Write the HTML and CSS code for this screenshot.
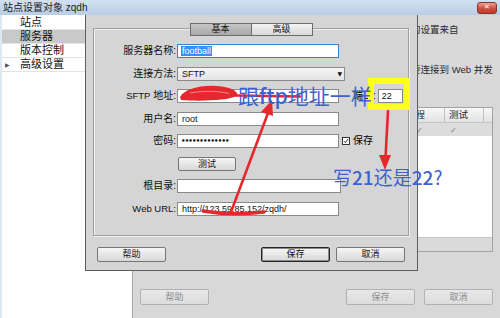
FILE: index.html
```html
<!DOCTYPE html>
<html lang="zh-CN">
<head>
<meta charset="utf-8">
<title>站点设置对象 zqdh</title>
<link rel="stylesheet" href="styles.css">
</head>
<body>
<div class="app">
  <div class="titlebar">
    <span class="title">站点设置对象 zqdh</span>
    <span class="close">✕</span>
  </div>
  <div class="main">
    <div class="sidebar">
      <div class="nav-item">站点</div>
      <div class="nav-item selected">服务器</div>
      <div class="nav-item">版本控制</div>
      <div class="nav-item"><span class="tri">▶</span>高级设置</div>
    </div>
    <div class="content">
      <p class="info info-1">的设置来自</p>
      <p class="info info-2">要连接到 Web 并发</p>
      <div class="table">
        <div class="thead">
          <div class="th c1">远程</div>
          <div class="th c2">测试</div>
          <div class="th c3"></div>
        </div>
        <div class="trow">
          <div class="td c1"><span class="tick">✓</span></div>
          <div class="td c2"><span class="tick">✓</span></div>
        </div>
        <div class="tbody"></div>
        <div class="tfoot"></div>
      </div>
      <div class="content-buttons">
        <span class="btn btn-disabled">帮助</span>
        <div class="btn-group wide">
          <span class="btn btn-disabled">保存</span>
          <span class="btn btn-disabled">取消</span>
        </div>
      </div>
    </div>
  </div>

  <div class="dialog">
    <div class="groupbox">
      <div class="tabs">
        <span class="tab tab-active">基本</span>
        <span class="tab tab-2">高级</span>
      </div>
      <div class="form">
        <label class="lbl">服务器名称:</label>
        <div class="field"><span class="input focus"><span class="sel">football</span></span></div>

        <label class="lbl">连接方法:</label>
        <div class="field"><span class="select"><span>SFTP</span><span class="arrow">▼</span></span></div>

        <label class="lbl"><span class="lat">SFTP</span> 地址:</label>
        <div class="field">
          <span class="input">123.59.85</span>
          <span class="port-label">端口:</span>
          <span class="input port">22</span>
        </div>

        <label class="lbl">用户名:</label>
        <div class="field"><span class="input">root</span></div>

        <label class="lbl">密码:</label>
        <div class="field">
          <span class="input pass">•••••••••••••</span>
          <span class="check"><svg width="8" height="8" viewBox="0 0 8 8"><path d="M1.3 4.2 L3.2 6.2 L6.8 1.4" fill="none" stroke="#111" stroke-width="1.2"/></svg></span>
          <span class="check-label">保存</span>
        </div>

        <span class="lbl"></span>
        <div class="field"><span class="btn btn-test">测试</span></div>

        <label class="lbl">根目录:</label>
        <div class="field"><span class="input root"></span></div>

        <label class="lbl"><span class="lat">Web URL:</span></label>
        <div class="field"><span class="input">http://123.59.85.152/zqdh/</span></div>
      </div>
    </div>
    <div class="dlg-buttons">
      <span class="btn">帮助</span>
      <div class="btn-group">
        <span class="btn btn-default">保存</span>
        <span class="btn">取消</span>
      </div>
    </div>
  </div>

  <div class="annotations">
    <svg class="marks" width="500" height="318" viewBox="0 0 500 318">
      <path d="M180 97 C 185 88, 204 84, 222 86.5 C 232 88, 239 92, 237 96 C 228 100.5, 200 101.5, 181 100 Z" fill="#e5282d"/>
      <path d="M190 93 C 204 90.5, 218 91, 229 93.5" fill="none" stroke="#f3a0a0" stroke-width="0.8"/>
      <path d="M236 95.5 L300 96.5" fill="none" stroke="#e5282d" stroke-width="2.4" stroke-linecap="round"/>
      <path d="M203 211 Q 232 216 264 212" fill="none" stroke="#e5282d" stroke-width="3.4" stroke-linecap="round"/>
      <path d="M231 212 L268 113" fill="none" stroke="#e5282d" stroke-width="2.6" stroke-linecap="round"/>
      <polygon points="272,100 261,112 273,116" fill="#e5282d"/>
      <path d="M388 111 L385.5 158" fill="none" stroke="#e5282d" stroke-width="2.6" stroke-linecap="round"/>
      <polygon points="379,155 391,155 385,170" fill="#e5282d"/>
    </svg>
    <div class="yellow-box"></div>
    <div class="note note-1">跟<span class="note-lat">ftp</span>地址一样</div>
    <div class="note note-2">写<span class="note-lat">21</span>还是<span class="note-lat">22</span>?</div>
  </div>
</div>
</body>
</html>
```

FILE: styles.css
```css
* { box-sizing: border-box; }
html, body { margin: 0; padding: 0; }
body {
  width: 500px;
  height: 318px;
  overflow: hidden;
  font-family: "Liberation Sans", "Noto Sans CJK SC", sans-serif;
  font-size: 10px;
  color: #000;
  background: #d8d8d8;
}
.app {
  position: relative;
  width: 500px;
  height: 318px;
  display: flex;
  flex-direction: column;
  overflow: hidden;
}

/* title bar */
.titlebar {
  height: 15px;
  flex: none;
  display: flex;
  align-items: center;
  justify-content: space-between;
  padding: 0 3px 0 3px;
  background: linear-gradient(#d2e0f0, #b9cde5);
  font-size: 10px;
  line-height: 14px;
  color: #1b1b1b;
}
.close {
  width: 20px;
  height: 12px;
  border: 1px solid #8c3328;
  border-radius: 3px;
  background: linear-gradient(#eea094, #d04c3d 55%, #c23a2d);
  color: #fff;
  font-family: "DejaVu Sans", sans-serif;
  font-size: 7px;
  font-weight: bold;
  display: flex;
  align-items: center;
  justify-content: center;
  line-height: 1;
}

/* main */
.main {
  flex: 1;
  display: flex;
  min-height: 0;
}
.sidebar {
  width: 133px;
  flex: none;
  background: #fff;
  border-left: 2px solid #dde8f2;
  border-right: 1px solid #a5a5a5;
  padding-top: 1px;
  font-size: 11px;
}
.nav-item {
  height: 14px;
  line-height: 13px;
  padding-left: 18px;
  border-bottom: 1px solid #e4e4e4;
  white-space: nowrap;
  color: #111;
}
.nav-item.selected { background: #c9c9c9; }
.tri {
  display: inline-block;
  width: 15px;
  margin-left: -15px;
  font-family: "DejaVu Sans", sans-serif;
  font-size: 6px;
  color: #555;
  vertical-align: 1px;
}

.content {
  flex: 1;
  display: flex;
  flex-direction: column;
  font-size: 9.5px;
  color: #2a2a2a;
  background: #d8d8d8;
}
.info {
  margin: 0 0 0 278px;
  line-height: 12px;
  white-space: nowrap;
}
.info-1 { margin-top: 9px; }
.info-2 { margin-top: 28px; }

.table {
  margin: 31px 0 0 267px;
  width: 93px;
  height: 145px;
  border: 1px solid #a3a3a3;
  background: #fff;
  display: flex;
  flex-direction: column;
}
.thead {
  height: 15px;
  display: flex;
  background: linear-gradient(#f7f7f7, #e2e2e2);
  border-bottom: 1px solid #c6c6c6;
  color: #1e1e1e;
}
.th, .td { line-height: 13px; white-space: nowrap; }
.c1 { width: 44px; padding-left: 5px; border-right: 1px solid #c2c2c2; }
.c2 { width: 39px; padding-left: 4px; border-right: 1px solid #c2c2c2; }
.c3 { flex: 1; }
.trow {
  height: 13px;
  display: flex;
  background: #dcdcdc;
}
.trow .td { border-right: 0; }
.trow .c1 { padding-left: 15px; }
.trow .c2 { padding-left: 5px; }
.tick {
  font-family: "DejaVu Sans", sans-serif;
  font-size: 8px;
  color: #7a7a7a;
}
.tbody { flex: 1; background: #fff; }
.tfoot {
  height: 14px;
  background: #dadada;
  border-top: 1px solid #c4c4c4;
}

.content-buttons {
  margin-top: auto;
  margin-bottom: 13px;
  padding: 0 7px;
  display: flex;
  justify-content: space-between;
}
.btn-group { display: flex; gap: 6px; }
.btn-group.wide { gap: 9px; }

/* buttons */
.btn {
  width: 69px;
  height: 15px;
  border: 1px solid #767676;
  border-radius: 2px;
  background: linear-gradient(#f6f6f6, #d8d8d8);
  font-size: 9px;
  line-height: 13px;
  text-align: center;
  color: #111;
  display: block;
}
.content-buttons .btn { height: 16px; line-height: 14px; }
.btn-disabled {
  border-color: #b2b2b2;
  color: #8c8c8c;
  background: linear-gradient(#e8e8e8, #dcdcdc);
}
.btn-default {
  border-color: #262626;
  box-shadow: inset 0 0 0 1px #8a8a8a;
}
.btn-test {
  width: 58px;
  height: 14px;
  margin-left: 1px;
}

/* dialog */
.dialog {
  position: absolute;
  left: 85px;
  top: 15px;
  width: 333px;
  height: 256px;
  background: #d5d5d5;
  border: 1px solid #5d5d5d;
  border-top: 0;
  padding: 13px 8px 0 7px;
  display: flex;
  flex-direction: column;
  z-index: 5;
}
.groupbox {
  height: 208px;
  flex: none;
  border: 1px solid #a0a0a0;
  box-shadow: inset 1px 1px 0 #efefef, 1px 1px 0 #efefef;
  display: flex;
  flex-direction: column;
}
.tabs {
  display: flex;
  justify-content: center;
  margin-top: -6px;
}
.tab {
  width: 62px;
  height: 13px;
  border: 1px solid #6d6d6d;
  font-size: 9px;
  line-height: 11px;
  text-align: center;
  color: #111;
}
.tab-active { background: linear-gradient(#c6c6c6, #a8a8a8); }
.tab-2 {
  width: 61px;
  border-left: 0;
  background: linear-gradient(#f3f3f3, #d8d8d8);
}

.form {
  margin-top: 8px;
  display: grid;
  grid-template-columns: 83px auto;
  grid-auto-rows: 14px;
  row-gap: 8.5px;
  align-items: center;
}
.lbl {
  text-align: right;
  font-size: 10px;
  line-height: 14px;
  white-space: nowrap;
  color: #111;
  padding-right: 1px;
}
.lat { font-size: 9.5px; }
.field {
  display: flex;
  align-items: center;
  height: 14px;
}
.input {
  display: block;
  width: 162px;
  height: 14px;
  border: 1px solid #8a8a8a;
  background: #fff;
  font-family: "Liberation Sans", sans-serif;
  font-size: 9px;
  line-height: 12px;
  padding-left: 4px;
  white-space: nowrap;
  overflow: hidden;
  color: #111;
}
.input.focus {
  border-color: #3f7fd6;
  padding-left: 3px;
}
.sel {
  background: #3390ff;
  color: #fff;
  padding: 0 1px;
}
.select {
  width: 168px;
  height: 14px;
  border: 1px solid #8a8a8a;
  background: linear-gradient(#f5f5f5, #e4e4e4);
  display: flex;
  justify-content: space-between;
  align-items: center;
  padding: 0 2px 0 4px;
  font-size: 9px;
  line-height: 12px;
  color: #111;
}
.arrow {
  font-family: "DejaVu Sans", sans-serif;
  font-size: 6px;
  color: #111;
}
.port-label {
  margin-left: 14px;
  font-size: 10px;
  line-height: 14px;
  white-space: nowrap;
}
.input.port {
  width: 25px;
  margin-left: 2px;
  padding-left: 3px;
}
.input.pass {
  font-family: "DejaVu Sans", sans-serif;
  font-size: 7px;
  font-weight: bold;
  letter-spacing: -0.8px;
  padding-left: 3px;
}
.input.root { width: 164px; }
.check {
  width: 8px;
  height: 8px;
  margin-left: 3px;
  border: 1px solid #333;
  background: #fff;
  display: flex;
  align-items: center;
  justify-content: center;
}
.check svg { display: block; width: 6px; height: 6px; }
.check-label {
  margin-left: 3px;
  font-size: 10px;
  line-height: 14px;
}

.dlg-buttons {
  margin: 11px 4px 0 4px;
  display: flex;
  justify-content: space-between;
}

/* annotations */
.annotations {
  position: absolute;
  inset: 0;
  z-index: 10;
  pointer-events: none;
}
.marks { position: absolute; left: 0; top: 0; }
.yellow-box {
  position: absolute;
  left: 368px;
  top: 78px;
  width: 42px;
  height: 32px;
  border: 6px solid #ffff1e;
}
.note {
  position: absolute;
  font-family: "Noto Sans CJK SC", sans-serif;
  color: #3e63cf;
  line-height: 1;
  white-space: nowrap;
}
.note-1 {
  left: 238px;
  top: 85px;
  font-size: 21px;
}
.note-2 {
  left: 333px;
  top: 167px;
  font-size: 19px;
}
.note-lat { font-weight: 500; }
```
